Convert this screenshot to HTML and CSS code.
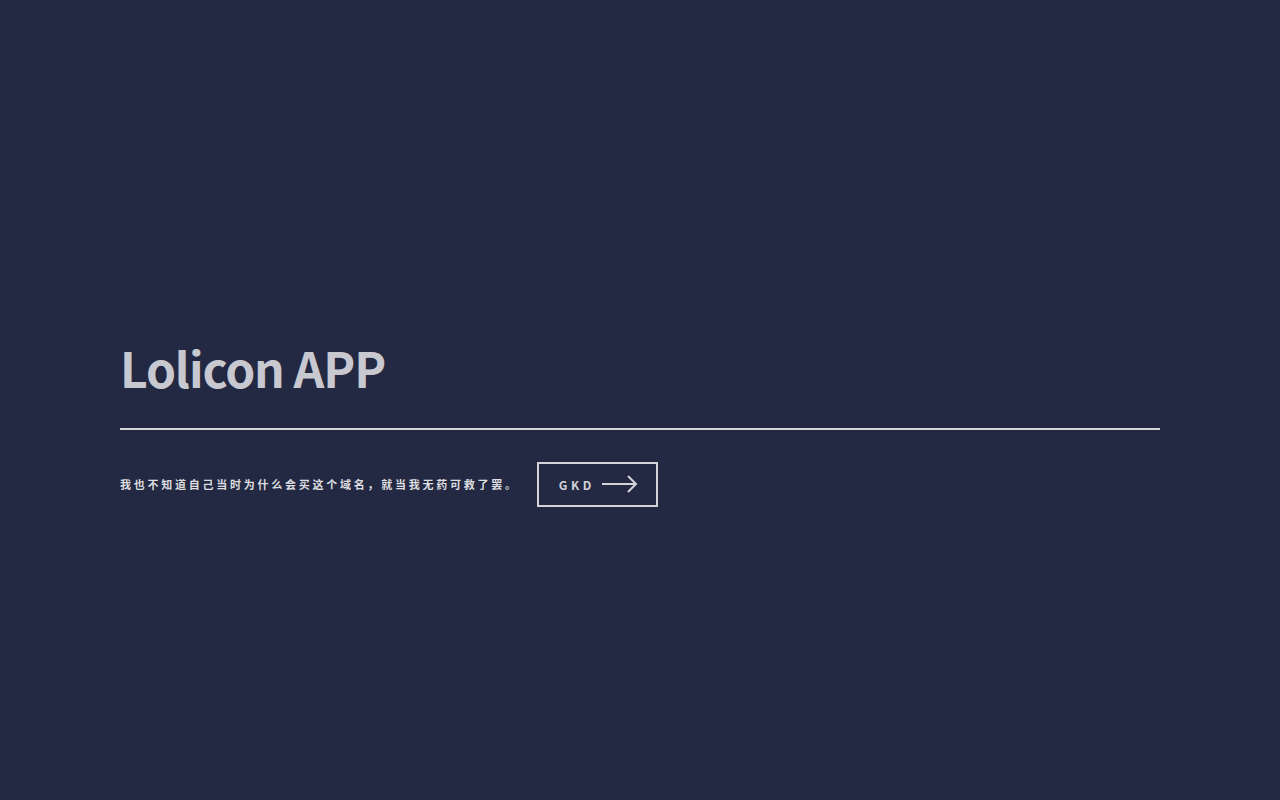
FILE: index.html
```html
<!DOCTYPE html>
<html lang="zh-CN">
<head>
<meta charset="utf-8">
<title>Lolicon APP</title>
<link rel="stylesheet" href="styles.css">
</head>
<body>
<section class="banner">
  <header class="major">
    <h1>Lolicon APP</h1>
  </header>
  <div class="content">
    <p>我也不知道自己当时为什么会买这个域名，就当我无药可救了罢。</p>
    <a class="button" href="#">GKD
      <svg class="arrow" width="36" height="18" viewBox="0 0 36 18" aria-hidden="true">
        <path d="M0 9H34M26 1L34 9L26 17" fill="none" stroke="currentColor" stroke-width="2"/>
      </svg>
    </a>
  </div>
</section>
</body>
</html>
```

FILE: styles.css
```css
html, body {
  margin: 0;
  padding: 0;
}
body {
  background: #242943;
  color: rgba(255, 255, 255, 0.75);
  font-family: "Noto Sans CJK SC", "Noto Sans", sans-serif;
  min-height: 100vh;
  display: flex;
  flex-direction: column;
  justify-content: center;
}
.banner {
  padding: 0 120px;
  margin-top: 49px;
}
.major h1 {
  margin: 0;
  font-size: 48px;
  font-weight: 700;
  letter-spacing: -1.1px;
  line-height: 1;
  color: rgba(255, 255, 255, 0.75);
  padding-bottom: 37px;
  border-bottom: 2px solid rgba(255, 255, 255, 0.8);
}
.content {
  display: flex;
  align-items: center;
  gap: 18px;
  margin-top: 32px;
}
.content p {
  margin: 0;
  font-size: 11px;
  font-weight: 700;
  letter-spacing: 0.25em;
  color: rgba(255, 255, 255, 0.85);
}
.button {
  display: inline-flex;
  align-items: center;
  gap: 7px;
  box-sizing: border-box;
  height: 45px;
  padding: 0 18px 0 20px;
  border: 2px solid rgba(255, 255, 255, 0.8);
  color: rgba(255, 255, 255, 0.8);
  text-decoration: none;
  font-size: 12px;
  font-weight: 700;
  letter-spacing: 0.3em;
}
.arrow {
  display: block;
}
```
